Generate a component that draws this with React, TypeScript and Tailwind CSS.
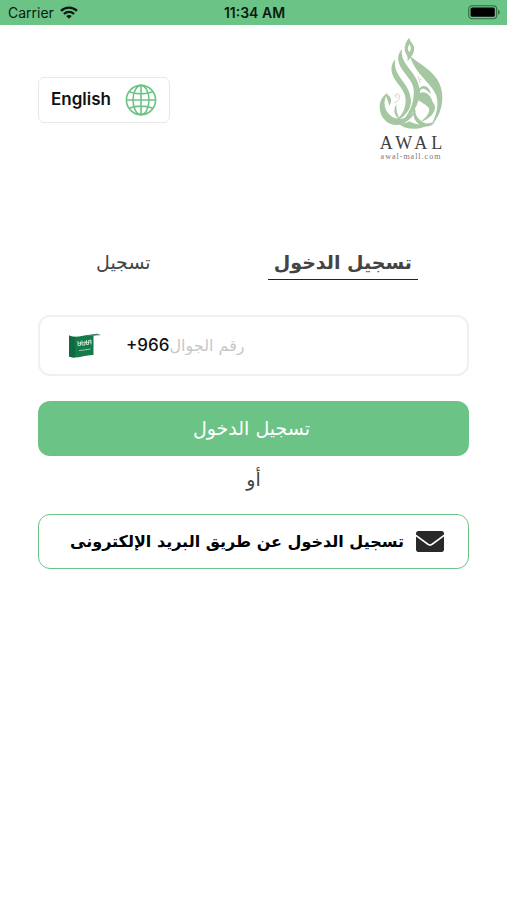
import { useState } from 'react'

const arabic = "font-['DejaVu_Sans',sans-serif]"

function WifiIcon() {
  return (
    <svg viewBox="0 0 18 13" className="w-[18px] h-[13px]" fill="none" stroke="#0b1a10" strokeWidth="2.3" aria-hidden="true">
      <path d="M1 4.9C5.4 0.5 12.6 0.5 17 4.9" />
      <path d="M3.9 8C6.7 5.2 11.3 5.2 14.1 8" />
      <path d="M9 12.8L6.2 10C7.8 8.5 10.2 8.5 11.8 10Z" fill="#0b1a10" stroke="none" />
    </svg>
  )
}

function BatteryIcon() {
  return (
    <svg viewBox="0 0 33 15" className="w-[33px] h-[15px]" aria-hidden="true">
      <rect x="0.7" y="0.7" width="28" height="13" rx="3.5" fill="none" stroke="#2f6b43" strokeWidth="1.1" />
      <rect x="2.6" y="2.6" width="24.2" height="9.2" rx="1.6" fill="#000" />
      <path d="M30.2 4.8C32.3 5.6 32.3 8.8 30.2 9.6Z" fill="#2f6b43" />
    </svg>
  )
}

function GlobeIcon() {
  return (
    <svg viewBox="0 0 32 32" className="w-8 h-8" fill="none" stroke="#6cc386" strokeWidth="1.6" aria-hidden="true">
      <circle cx="16" cy="16" r="14.6" />
      <ellipse cx="16" cy="16" rx="8" ry="14.6" />
      <path d="M16 1.4V30.6M1.4 16H30.6M4.2 7.8C11 10.6 21 10.6 27.8 7.8M4.2 24.2C11 21.4 21 21.4 27.8 24.2" />
    </svg>
  )
}

function FlagIcon() {
  return (
    <svg viewBox="0 0 34 26" className="w-[34px] h-[26px]" aria-hidden="true">
      <path d="M1 2.5C8 6 17 1 25.5 1.8V22C17 21.5 9 26.5 1 23.6Z" fill="#147a49" />
      <path d="M1 2.5C3 3.6 5 3.8 7 3.7V24.6C5 24.7 3 24.4 1 23.6Z" fill="#0f6a40" />
      <path d="M16 2.8L25 1.2C28 0.2 31 0.5 33 2.3C30 1.9 28 2.5 25 3Z" fill="#547f69" />
      <g stroke="#b9dcc8" fill="none">
        <path strokeWidth="1" d="M10 8V12.5H12.5V8.5M14 7.5V12H17V8M18.5 7V11.5H20.5V7.5L23 7V11.5M10 10.3L23 9" />
        <path strokeWidth="0.8" d="M11 17.6C15 17.2 19 16.6 22.5 16" />
      </g>
    </svg>
  )
}

function MailIcon() {
  return (
    <svg viewBox="0 0 28 21" className="w-7 h-[21px]" fill="#29292b" aria-hidden="true">
      <path d="M2.4 0H25.6C27 0 28 1 28 2.3V3.4L15.7 12.6C14.6 13.4 13.4 13.4 12.3 12.6L0 3.4V2.3C0 1 1 0 2.4 0Z" />
      <path d="M0 5.5L11.5 14.1C13.1 15.2 14.9 15.2 16.5 14.1L28 5.5V18.6C28 20 27 21 25.6 21H2.4C1 21 0 20 0 18.6Z" />
    </svg>
  )
}

function Logo() {
  return (
    <div className="flex flex-col items-center w-[72px]">
      <svg viewBox="28 20 194 276" className="w-[65px] h-[92px]" fill="#a5c7a2" role="img" aria-label="Awal">
        {/* loop at the tip */}
        <path fillRule="evenodd" d="M118 22C108 33 102 50 106 64C109 73 116 77 113 93C123 83 133 70 133 54C133 41 121 37 118 22ZM119 41C123 48 125 54 121 63C118 67 114 62 114 54C114 49 117 46 119 41Z" />
        {/* right stroke */}
        <path d="M120 76C142 97 180 113 202 147C228 188 221 249 182 289C199 257 209 226 199 195C187 160 137 133 120 76Z" />
        {/* middle strokes */}
        <path d="M96 56C78 78 84 99 101 123C117 146 131 158 132 183C133 222 116 256 89 280C125 261 150 224 149 182C148 152 133 134 116 112C101 92 94 79 96 56Z" />
        <path d="M76 86C59 109 63 129 78 151C92 171 107 186 107 207C109 235 96 257 75 273C105 262 126 237 123 207C120 179 107 164 92 143C78 123 73 109 76 86Z" />
        {/* left bowl */}
        <path d="M54 187C34 199 26 219 31 243C38 275 69 292 97 281C116 273 131 257 139 238C120 259 96 270 76 263C53 255 44 234 44 217C45 204 48 197 54 187Z" />
        <path d="M48 190C62 196 70 209 58 227C57 213 50 207 48 190ZM80 222C69 238 72 256 91 269C84 254 78 243 80 222Z" />
        {/* inner knot */}
        <path d="M183 191C180 171 164 161 152 171C138 182 132 194 141 205C153 217 172 222 178 235C180 249 167 263 150 276C178 266 199 247 195 226C190 209 164 203 153 192C149 185 150 178 156 176C166 173 172 182 183 191Z" />
        <path d="M151 188C169 179 187 198 191 225C178 215 164 207 151 200ZM141 211C132 229 134 253 148 267C162 281 177 284 194 276C181 295 152 290 140 275C126 257 127 230 141 211Z" />
        {/* base */}
        <path d="M87 280C108 301 156 302 189 275C166 284 138 286 119 273C109 279 100 281 87 280Z" />
        <g fill="none" stroke="#dcd3c6" strokeWidth="3">
          <path d="M75 196C78 187 91 190 89 201C88 210 79 215 74 218M82 202C77 202 76 198 79 194" />
          <path d="M145 138L149 151L154 145M147 156L154 154" />
        </g>
      </svg>
      <span className="mt-1 font-['Liberation_Serif',serif] text-lg leading-5 text-[#404040] tracking-[4px] -mr-[4px]">AWAL</span>
      <span className="font-['Liberation_Serif',serif] text-[8px] leading-[8px] text-[#777] tracking-[1px] whitespace-nowrap">awal-mall.com</span>
    </div>
  )
}

export default function App() {
  const [phone, setPhone] = useState('')

  return (
    <div className="min-h-screen bg-white font-['Inter',sans-serif]">
      {/* Status bar */}
      <header className="grid grid-cols-3 items-center h-[25px] pl-2 pr-1.5 bg-[#6cc386] text-sm text-[#0b1a10]">
        <div className="flex items-center gap-1.5">
          <span>Carrier</span>
          <WifiIcon />
        </div>
        <span className="text-center font-semibold">11:34 AM</span>
        <div className="flex justify-end">
          <BatteryIcon />
        </div>
      </header>

      <main className="px-[38px]">
        <div className="flex items-start justify-between h-[136px] pt-3 pr-[22px]">
          <button type="button" className="flex items-center justify-between w-[132px] h-[46px] mt-10 px-3 border border-[#e8e8e8] rounded-md text-[17px] font-semibold text-[#111]">
            English
            <GlobeIcon />
          </button>
          <Logo />
        </div>

        {/* Tabs */}
        <div role="tablist" className={`flex items-start justify-between mt-[86px] pl-[58px] pr-[51px] text-[19px] leading-[30px] text-[#444] ${arabic}`}>
          <button type="button" role="tab" aria-selected="false" lang="ar" dir="rtl">
            تسجيل
          </button>
          <button type="button" role="tab" aria-selected="true" lang="ar" dir="rtl" className="px-1.5 pb-0.5 font-bold border-b border-[#222]">
            تسجيل الدخول
          </button>
        </div>

        <form onSubmit={(e) => e.preventDefault()}>
          <div className="flex items-center h-[61px] mt-[35px] pl-7 pr-4 border-2 border-[#f0f0f0] rounded-xl">
            <FlagIcon />
            <label htmlFor="phone" className="ml-6 text-[17px] font-medium text-[#111]">+966</label>
            <input
              id="phone"
              type="tel"
              value={phone}
              onChange={(e) => setPhone(e.target.value)}
              placeholder="رقم الجوال"
              className={`flex-1 min-w-0 text-base text-[#111] placeholder:text-[#c8c8c8] outline-none ${arabic}`}
            />
          </div>

          <button type="submit" lang="ar" dir="rtl" className={`w-full h-[55px] mt-[25px] pl-1 pr-2 rounded-xl bg-[#6cc386] text-[19px] font-medium text-white ${arabic}`}>
            تسجيل الدخول
          </button>
        </form>

        <p lang="ar" dir="rtl" className={`mt-1.5 mb-[18px] text-center text-[19px] leading-[34px] text-[#444] ${arabic}`}>أو</p>

        <button type="button" lang="ar" dir="rtl" className={`flex items-center justify-start gap-3 w-full h-[55px] px-6 border border-[#6cc386] rounded-xl text-base font-bold text-black whitespace-nowrap ${arabic}`}>
          <MailIcon />
          تسجيل الدخول عن طريق البريد الإلكترونى
        </button>
      </main>
    </div>
  )
}
